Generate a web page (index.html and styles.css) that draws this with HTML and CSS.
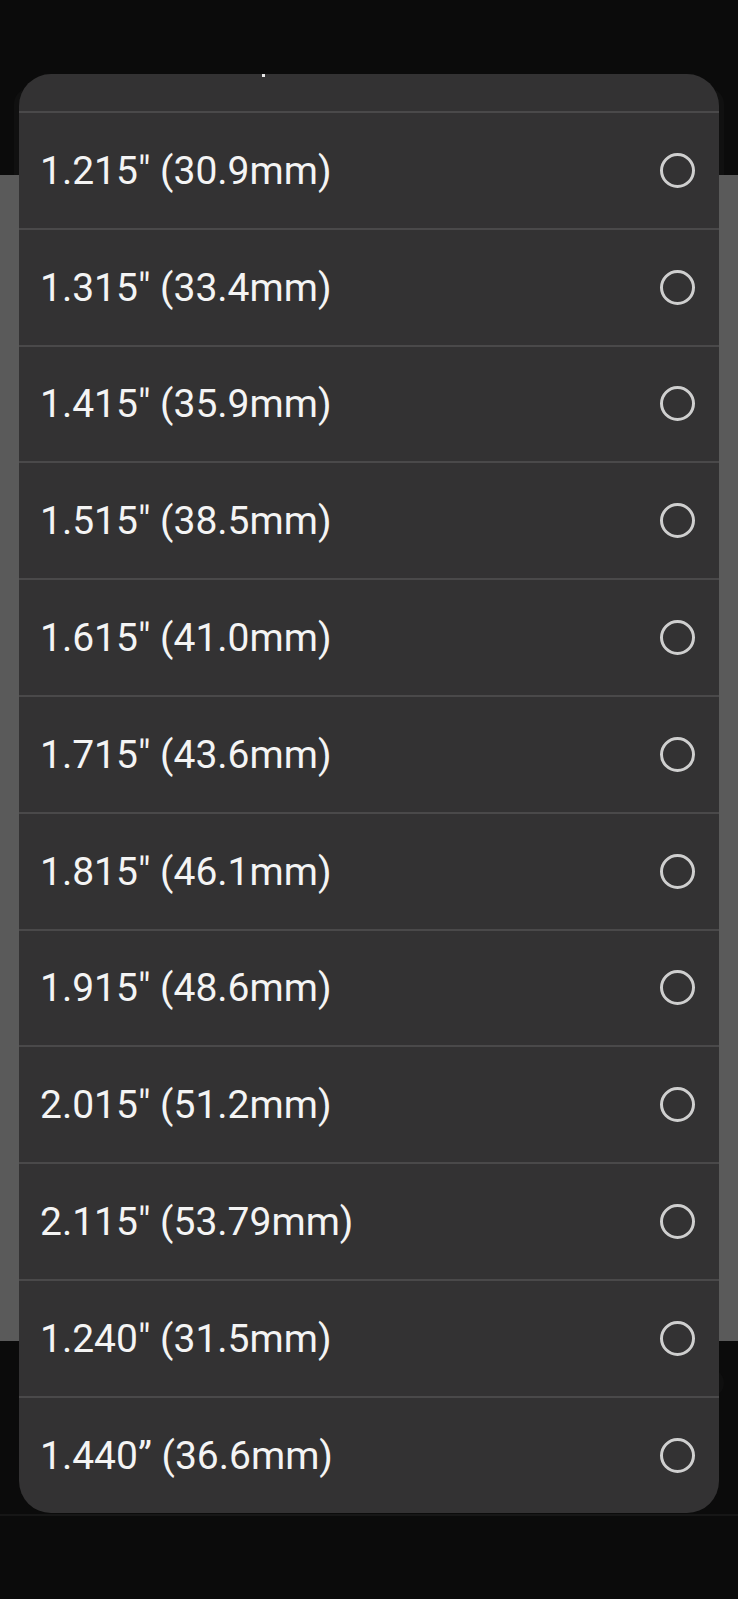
FILE: index.html
```html
<!DOCTYPE html>
<html>
<head>
<meta charset="utf-8">
<link rel="stylesheet" href="styles.css">
</head>
<body>
<div class="app">
  <div class="topbar"><div class="topcard"></div></div>
  <div class="main"></div>
  <div class="bottom"><div class="bottom-ghost"></div><div class="bottom-line"></div></div>
</div>
<div class="sheet">
  <div class="clip-row"><span class="clip-dot"></span></div>
  <div class="row"><span class="label">1.215" (30.9mm)</span><span class="radio"></span></div>
  <div class="row"><span class="label">1.315" (33.4mm)</span><span class="radio"></span></div>
  <div class="row"><span class="label">1.415" (35.9mm)</span><span class="radio"></span></div>
  <div class="row"><span class="label">1.515" (38.5mm)</span><span class="radio"></span></div>
  <div class="row"><span class="label">1.615" (41.0mm)</span><span class="radio"></span></div>
  <div class="row"><span class="label">1.715" (43.6mm)</span><span class="radio"></span></div>
  <div class="row"><span class="label">1.815" (46.1mm)</span><span class="radio"></span></div>
  <div class="row"><span class="label">1.915" (48.6mm)</span><span class="radio"></span></div>
  <div class="row"><span class="label">2.015" (51.2mm)</span><span class="radio"></span></div>
  <div class="row"><span class="label">2.115" (53.79mm)</span><span class="radio"></span></div>
  <div class="row"><span class="label">1.240" (31.5mm)</span><span class="radio"></span></div>
  <div class="row"><span class="label">1.440” (36.6mm)</span><span class="radio"></span></div>
</div>
</body>
</html>
```
FILE: styles.css
```css
html, body {
  margin: 0;
  padding: 0;
}
body {
  width: 738px;
  height: 1599px;
  background: #0b0b0b;
  font-family: Roboto, "Liberation Sans", sans-serif;
  position: relative;
  overflow: hidden;
}
.app {
  display: flex;
  flex-direction: column;
  height: 1599px;
}
.topbar {
  height: 175px;
  background: #0b0b0b;
  padding: 88px 14px 0 14px;
  box-sizing: border-box;
}
.topcard {
  height: 87px;
  background: #101010;
  border-radius: 16px 16px 0 0;
}
.main {
  height: 1166px;
  background: #5a5a5a;
}
.bottom {
  flex: 1;
  background: #0b0b0b;
  position: relative;
}
.bottom-ghost {
  position: absolute;
  right: 14px;
  top: 28px;
  width: 28px;
  height: 28px;
  border-radius: 50%;
  background: #0f0f0f;
}
.bottom-line {
  position: absolute;
  left: 0;
  right: 0;
  top: 173px;
  height: 2px;
  background: #161616;
}
.sheet {
  position: absolute;
  top: 74px;
  left: 19px;
  width: 700px;
  background: #333233;
  border-radius: 32px;
  overflow: hidden;
}
.clip-row {
  height: 37px;
  position: relative;
}
.clip-dot {
  position: absolute;
  left: 243px;
  top: 0;
  width: 3px;
  height: 3px;
  background: #e8e8e8;
}
.row {
  height: 114.8px;
  border-top: 2px solid #4a494a;
  display: flex;
  align-items: center;
  justify-content: space-between;
  padding: 0 24px 0 21px;
}
.label {
  color: #f4f4f4;
  font-size: 39px;
  line-height: 1;
  padding-top: 2px;
}
.radio {
  width: 29px;
  height: 29px;
  border: 3px solid #cfcfcf;
  border-radius: 50%;
  flex: none;
}
```
